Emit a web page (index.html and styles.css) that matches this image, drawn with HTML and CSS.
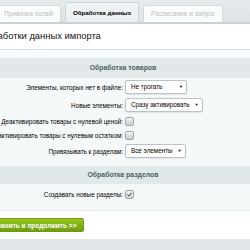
FILE: index.html
```html
<!DOCTYPE html>
<html lang="ru">
<head>
    <meta charset="UTF-8">
    <title>Обработка данных</title>
<link rel="stylesheet" href="styles.css">
</head>
<body>
    <div class="tabs">
        <div class="tab">Привязка полей</div>
        <div class="tab tab-active">Обработка данных</div>
        <div class="tab">Расписание и запуск</div>
    </div>
    <div class="title"><span class="title-text">Настройка обработки данных импорта</span></div>
    <div class="form">
        <div class="heading heading-first">Обработка товаров</div>
        <div class="row row-select">
            <div class="label"><span>Элементы, которых нет в файле:</span></div>
            <div class="select select-short"><span>Не трогать</span><span class="arrow">&#9660;</span></div>
        </div>
        <div class="row row-select">
            <div class="label"><span>Новые элементы:</span></div>
            <div class="select"><span>Сразу активировать</span><span class="arrow">&#9660;</span></div>
        </div>
        <div class="row row-check">
            <div class="label"><span>Деактивировать товары с нулевой ценой:</span></div>
            <div class="check"></div>
        </div>
        <div class="row row-check">
            <div class="label"><span>Деактивировать товары с нулевым остатком:</span></div>
            <div class="check"></div>
        </div>
        <div class="row row-select">
            <div class="label"><span>Привязывать к разделам:</span></div>
            <div class="select"><span>Все элементы</span><span class="arrow">&#9660;</span></div>
        </div>
        <div class="heading">Обработка разделов</div>
        <div class="row row-last">
            <div class="label"><span>Создавать новые разделы:</span></div>
            <div class="check">
                <svg width="7" height="7" viewBox="0 0 7 7"><path d="M1.5 3.6 L3 5 L5.6 1.8" fill="none" stroke="#333" stroke-width="0.9"/></svg>
            </div>
        </div>
    </div>
    <div class="footer">
        <button class="save">Сохранить и продолжить &gt;&gt;</button>
    </div>
    <div class="bottom"></div>
</body>
</html>
```

FILE: styles.css
```css
body{
    margin:0;
    width:250px;
    height:250px;
    overflow:hidden;
    font-family:"Liberation Sans", Arial, sans-serif;
    background-color:#e1e7e9;
    color:#000;
}
.tabs{
    display:flex;
    align-items:flex-end;
    height:22px;
    background:linear-gradient(#e6ecee,#dbe3e5);
    border-bottom:2px solid #c9d3d6;
    margin-left:-6px;
}
.tab{
    height:16px;
    padding:0 7px 0 9px;
    margin-right:4px;
    background-color:#fbfcfc;
    border:1px solid #d4dcdf;
    border-bottom:none;
    border-radius:2px 2px 0 0;
    font-size:6.6px;
    line-height:16px;
    color:#b6bec1;
    white-space:nowrap;
}
.tab-active{
    height:19px;
    line-height:19px;
    padding:0 7px;
    background:linear-gradient(#f1f4f5,#e9eef0);
    border-color:#cbd4d7;
    color:#000;
    font-weight:bold;
    font-size:6.2px;
}
.tab:last-child{
    width:64px;
    padding:0 7px;
}
.title{
    height:25px;
    background-color:#fff;
    border-bottom:1px solid #d9e2e4;
    overflow:hidden;
    white-space:nowrap;
}
.title-text{
    display:block;
    font-size:9.4px;
    line-height:24px;
    margin-left:-67px;
    color:#111;
}
.form{
    background-color:#f5f9f9;
    padding:8px 0 6px;
}
.heading{
    height:18px;
    line-height:18px;
    background-color:#e0e8ea;
    text-align:center;
    padding-right:4px;
    font-size:6.9px;
    font-weight:bold;
    color:#4c6166;
    margin-top:6px;
}
.heading-first{
    height:20px;
    line-height:20px;
    margin-top:0;
}
.row{
    display:flex;
    align-items:center;
    font-size:6.3px;
    color:#000;
}
.row-select{
    height:18px;
}
.row-check{
    height:14px;
}
.row-last{
    height:20px;
}
.label{
    flex:0 0 123px;
    min-width:0;
    display:flex;
    justify-content:flex-end;
    white-space:nowrap;
    margin-right:2px;
}
.label span{
    flex-shrink:0;
}
.select{
    box-sizing:border-box;
    height:14px;
    line-height:12px;
    padding:0 3px 0 5px;
    background-color:#fff;
    border:1px solid #b9c2c5;
    border-radius:2px;
    box-shadow:0 1px 1px rgba(0,0,0,0.08);
    display:flex;
    justify-content:space-between;
    white-space:nowrap;
    font-size:6.3px;
}
.select-short{
    width:62px;
}
.arrow{
    font-size:4px;
    margin-left:5px;
}
.check{
    width:7px;
    height:7px;
    border:1px solid #9fa9ad;
    border-radius:2px;
    background:linear-gradient(#eef1f2,#c9d1d4);
    display:flex;
}
.footer{
    height:28px;
    background-color:#fff;
    border-top:1px solid #e4eaec;
    display:flex;
    align-items:center;
}
.save{
    height:14px;
    margin-left:-23px;
    padding:0 7px;
    border:1px solid #6f9a14;
    border-radius:2px;
    background:linear-gradient(#95c41f,#6e9e0f);
    color:#fff;
    font-family:"Liberation Sans", Arial, sans-serif;
    font-size:6.5px;
    font-weight:bold;
    white-space:nowrap;
}
.bottom{
    height:10px;
    background-color:#e1e7e9;
}
```
